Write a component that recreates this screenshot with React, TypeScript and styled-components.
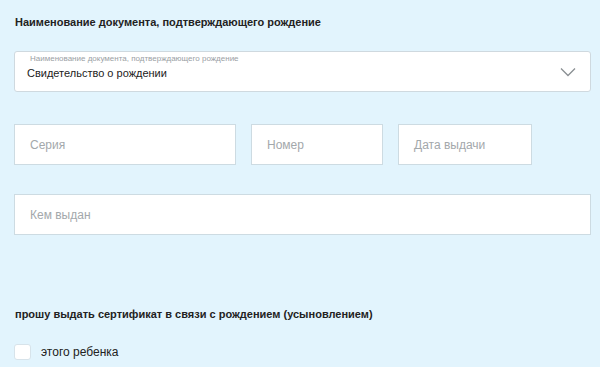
import styled, { createGlobalStyle } from "styled-components";

const GlobalStyle = createGlobalStyle`
  html, body {
    margin: 0;
    padding: 0;
    background: #e2f4fd;
  }
  body {
    font-family: "Liberation Sans", Arial, sans-serif;
    color: #222;
  }
`;

const Page = styled.div`
  width: 600px;
  height: 367px;
  padding: 15px 9px 0 14px;
  box-sizing: border-box;
  overflow: hidden;
`;

const SectionTitle = styled.div<{ $top?: number; $gap?: number }>`
  font-size: 11px;
  font-weight: bold;
  line-height: 15px;
  padding-left: 1px;
  margin-top: ${(p) => p.$top ?? 0}px;
  margin-bottom: ${(p) => p.$gap ?? 0}px;
`;

const SelectBox = styled.div`
  position: relative;
  height: 41px;
  box-sizing: border-box;
  background: #fff;
  border: 1px solid #cfd9df;
  border-radius: 3px;
  padding: 2px 40px 0 12px;
  display: flex;
  flex-direction: column;
`;

const FloatLabel = styled.div`
  font-size: 8px;
  line-height: 9px;
  color: #9aa0a4;
  padding-left: 3px;
`;

const SelectValue = styled.div`
  font-size: 11px;
  line-height: 15px;
  margin-top: 3px;
  color: #222;
`;

const Chevron = styled.svg`
  position: absolute;
  right: 14px;
  top: 15px;
`;

const Row = styled.div<{ $top: number }>`
  display: flex;
  gap: 15px;
  margin-top: ${(p) => p.$top}px;
`;

const Field = styled.div<{ $w?: number }>`
  ${(p) => (p.$w ? `width: ${p.$w}px;` : "flex: 1;")}
  height: 41px;
  box-sizing: border-box;
  background: #fff;
  border: 1px solid #cddbe2;
  display: flex;
  align-items: center;
  padding-left: 15px;
  font-size: 12px;
  color: #a3a8ab;
`;

const CheckRow = styled.label`
  display: flex;
  align-items: center;
  gap: 10px;
  font-size: 12px;
  color: #222;
  margin-top: 22px;
`;

const Box = styled.span`
  width: 17px;
  height: 16px;
  box-sizing: border-box;
  background: #fff;
  border: 1px solid #d7e3ea;
  border-radius: 3px;
`;

export default function App() {
  return (
    <>
      <GlobalStyle />
      <Page>
        <SectionTitle $gap={21}>
          Наименование документа, подтверждающего рождение
        </SectionTitle>
        <SelectBox>
          <FloatLabel>Наименование документа, подтверждающего рождение</FloatLabel>
          <SelectValue>Свидетельство о рождении</SelectValue>
          <Chevron width="16" height="10" viewBox="0 0 16 10">
            <path d="M1 1.5 L8 8.5 L15 1.5" fill="none" stroke="#8a8f93" strokeWidth="1.3" />
          </Chevron>
        </SelectBox>
        <Row $top={32}>
          <Field $w={222}>Серия</Field>
          <Field $w={132}>Номер</Field>
          <Field $w={134}>Дата выдачи</Field>
        </Row>
        <Row $top={29}>
          <Field>Кем выдан</Field>
        </Row>
        <SectionTitle $top={72}>
          прошу выдать сертификат в связи с рождением (усыновлением)
        </SectionTitle>
        <CheckRow>
          <Box />
          этого ребенка
        </CheckRow>
      </Page>
    </>
  );
}
